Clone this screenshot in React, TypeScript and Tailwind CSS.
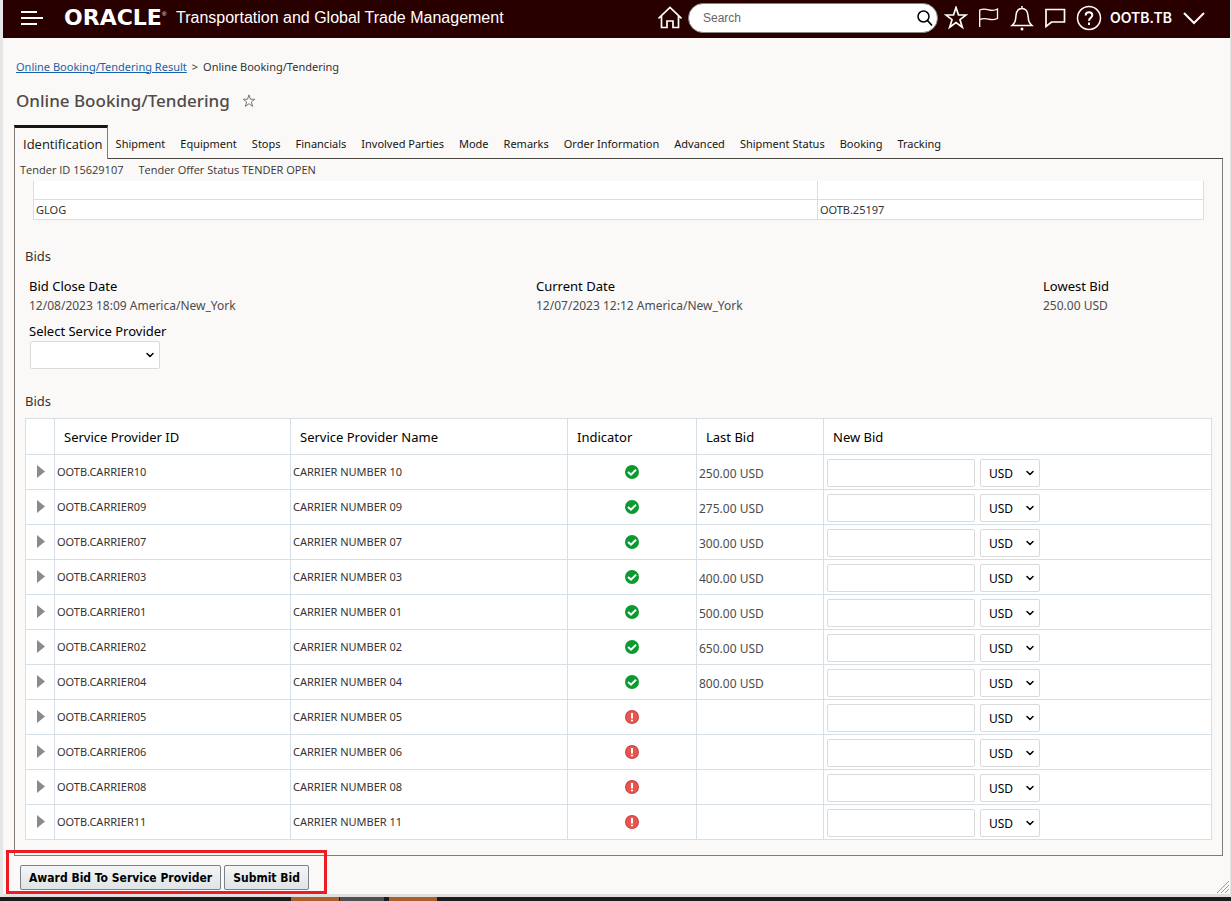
import { ChevronDown } from 'lucide-react'

const TABS = [
  'Shipment', 'Equipment', 'Stops', 'Financials', 'Involved Parties', 'Mode', 'Remarks',
  'Order Information', 'Advanced', 'Shipment Status', 'Booking', 'Tracking',
]

const BIDS = [
  { no: '10', bid: '250.00 USD' },
  { no: '09', bid: '275.00 USD' },
  { no: '07', bid: '300.00 USD' },
  { no: '03', bid: '400.00 USD' },
  { no: '01', bid: '500.00 USD' },
  { no: '02', bid: '650.00 USD' },
  { no: '04', bid: '800.00 USD' },
  { no: '05', bid: '' },
  { no: '06', bid: '' },
  { no: '08', bid: '' },
  { no: '11', bid: '' },
]

const ICON = { fill: 'none', stroke: 'currentColor', strokeWidth: 1.7, 'aria-hidden': true } as const

function HomeIcon() {
  return (
    <svg width="24" height="24" viewBox="0 0 24 24" {...ICON}>
      <path d="M.5 12.500 12 1.500l11.500 11M3.500 10v11.500H9v-6.500h6v6.500h5.500V10" />
    </svg>
  )
}

function StarIcon({ size }: { size: number }) {
  return (
    <svg width={size} height={size} viewBox="0 0 24 24" {...ICON}>
      <path d="m12 1.500 2.500 7.500h7.500l-6 4.700 2.300 7.500-6.300-4.600-6.300 4.600L8 13.700 2 9h7.500z" />
    </svg>
  )
}

function FlagIcon() {
  return (
    <svg width="22" height="22" viewBox="0 0 22 22" {...ICON} strokeWidth={1.3}>
      <path d="M1.700 20V3c3.500-1.500 6-1 9-.2s5.500 1 8.800-.8v9.500c-3.300 1.500-6 1.500-9 .7s-5.500-1.200-8.800.5" />
    </svg>
  )
}

function BellIcon() {
  return (
    <svg width="24" height="26" viewBox="0 0 24 26" {...ICON} strokeWidth={1.5}>
      <path d="M2 20.500c3.500-3 3.500-5 4-10C6.400 6.500 8.500 3.500 12 3.500s5.600 3 6 7c.5 5 .5 7 4 10zM12 3.500V1" />
      <circle cx="12" cy="24" r="1.500" fill="currentColor" stroke="none" />
    </svg>
  )
}

function CommentIcon() {
  return (
    <svg width="22" height="22" viewBox="0 0 22 22" {...ICON}>
      <path d="M2 2.500h18.500v12.500H7.500L2 19.500z" />
    </svg>
  )
}

function HelpIcon() {
  return (
    <svg width="26" height="26" viewBox="0 0 26 26" {...ICON} strokeWidth={2}>
      <circle cx="13" cy="13" r="11.500" strokeWidth={1.5} />
      <path d="M9.700 10.500C9.700 8.300 11 7.300 13 7.300s3.300 1.100 3.300 3c0 2.400-3.300 2.600-3.300 5.400M13 17.500V20" />
    </svg>
  )
}

function Indicator({ ok }: { ok: boolean }) {
  return (
    <svg
      className="mx-auto block"
      width="14"
      height="14"
      viewBox="0 0 14 14"
      role="img"
      aria-label={ok ? 'Bid received' : 'No bid'}
    >
      <circle cx="7" cy="7" r="7" fill={ok ? '#0a9a2f' : '#c9433f'} />
      {ok
        ? <path d="m3 7 3 2.600 5-4.900" fill="none" stroke="#fff" strokeWidth="2" />
        : (
          <>
            <circle cx="7" cy="7" r="6" fill="#e85550" />
            <path d="M7 3v5.500M7 9.700v1.600" stroke="#fff" strokeWidth="2" />
          </>
        )}
    </svg>
  )
}

function Select({ label, id, value, className }: { label: string; id?: string; value: string; className: string }) {
  return (
    <span className={`relative inline-flex ${className}`}>
      <select
        id={id}
        aria-label={label}
        className="h-7 w-full appearance-none rounded-xs border border-[#dadada] bg-white pl-2 pt-px text-xs text-black"
      >
        <option>{value}</option>
      </select>
      <ChevronDown className="pointer-events-none absolute right-1 top-2 h-3 w-3 text-black" strokeWidth={3} aria-hidden="true" />
    </span>
  )
}

function Header() {
  return (
    <header className="flex h-[38px] items-center bg-[#280000] pb-0.5 pl-[17px] pr-6 font-['Liberation_Sans',sans-serif] text-white">
      <button type="button" aria-label="Menu" className="mr-5">
        <svg width="24" height="16" viewBox="0 0 24 16" {...ICON} strokeWidth={2}>
          <path d="M1 2h16M1 8h22M1 14h16" />
        </svg>
      </button>
      <span className="flex w-28 items-start whitespace-nowrap">
        <span className="font-['DejaVu_Sans',sans-serif] text-[22px] font-bold leading-6">ORACLE</span>
        <span className="text-[6px] leading-4">®</span>
      </span>
      <span className="flex-1 whitespace-nowrap text-base">Transportation and Global Trade Management</span>
      <div className="flex items-center">
        <button type="button" aria-label="Home" className="mr-1.5"><HomeIcon /></button>
        <div className="relative mr-1.5">
          <input
            type="search"
            placeholder="Search"
            aria-label="Search"
            className="block h-[30px] w-[250px] rounded-full border border-[#8a8580] bg-white pl-3.5 pr-8 text-xs text-black placeholder:text-[#666]"
          />
          <svg className="absolute right-1 top-1.5 text-black" width="18" height="18" viewBox="0 0 18 18" {...ICON}>
            <circle cx="7.500" cy="7.500" r="5.500" strokeWidth="1.500" />
            <path d="m11.500 11.500 4.500 5" />
          </svg>
        </div>
        <div className="flex items-center gap-2.5">
          <button type="button" aria-label="Favorites"><StarIcon size={24} /></button>
          <button type="button" aria-label="Flag"><FlagIcon /></button>
          <button type="button" aria-label="Notifications"><BellIcon /></button>
          <button type="button" aria-label="Comments"><CommentIcon /></button>
          <button type="button" aria-label="Help"><HelpIcon /></button>
        </div>
        <button type="button" className="ml-2 flex items-center gap-2.5 font-['Inter',sans-serif] text-sm font-semibold">
          OOTB.TB
          <svg width="24" height="16" viewBox="0 0 24 16" {...ICON} strokeWidth={2}>
            <path d="m2 3 10 10L22 3" />
          </svg>
        </button>
      </div>
    </header>
  )
}

function TabStrip() {
  return (
    <nav className="flex h-[34px] items-stretch" aria-label="Sections">
      <a
        href="#identification"
        aria-current="page"
        className="flex items-center border-x border-t-3 border-x-[#807b77] border-t-[#161513] pl-2 pr-1 pt-0.5 font-['Open_Sans',sans-serif] text-[13px] text-[#161513]"
      >
        Identification
      </a>
      <div className="flex flex-1 items-center gap-[15px] border-b border-[#4a4743] pl-2 pt-1.5 text-[11px] text-[#161513]">
        {TABS.map((tab) => (
          <a key={tab} href="#tab" className="whitespace-nowrap">{tab}</a>
        ))}
      </div>
    </nav>
  )
}

function Field({ label, value }: { label: string; value: string }) {
  return (
    <div>
      <dt className="text-black">{label}</dt>
      <dd className="text-xs leading-[19px] text-[#4c4c4c]">{value}</dd>
    </div>
  )
}

function BidTable() {
  const head = 'border-b border-r border-[#d6dfe6] pl-[9px] text-left text-[13px] font-normal text-black'
  const cell = 'border-b border-r border-[#d6dfe6] pl-0.5 text-[11px] text-[#333]'
  return (
    <table className="w-full table-fixed border-separate border-spacing-0 border-l border-t border-[#d6dfe6] bg-white">
      <colgroup>
        <col className="w-[29px]" />
        <col className="w-[236px]" />
        <col className="w-[277px]" />
        <col className="w-[129px]" />
        <col className="w-[127px]" />
        <col />
      </colgroup>
      <thead>
        <tr className="h-9">
          <th className={head} aria-label="Expand" />
          <th className={head}>Service Provider ID</th>
          <th className={head}>Service Provider Name</th>
          <th className={head}>Indicator</th>
          <th className={head}>Last Bid</th>
          <th className={head}>New Bid</th>
        </tr>
      </thead>
      <tbody>
        {BIDS.map(({ no, bid }) => (
          <tr key={no} className="h-[35px]">
            <td className={cell}>
              <button type="button" aria-label={`Expand carrier ${no}`} className="ml-[9px] block">
                <svg width="9" height="14" viewBox="0 0 9 14" fill="#878c90" aria-hidden="true">
                  <path d="M0 0 8 6.500 0 13z" />
                </svg>
              </button>
            </td>
            <td className={cell}>OOTB.CARRIER{no}</td>
            <td className={cell}>CARRIER NUMBER {no}</td>
            <td className="border-b border-r border-[#d6dfe6]"><Indicator ok={bid !== ''} /></td>
            <td className="border-b border-r border-[#d6dfe6] pl-0.5 pt-1 text-xs text-[#4c4c4c]">{bid}</td>
            <td className="border-b border-r border-[#d6dfe6] pl-[3px]">
              <div className="flex gap-[5px] pt-0.5">
                <input
                  type="text"
                  aria-label={`New bid for carrier ${no}`}
                  className="h-7 w-[148px] rounded-xs border border-[#dadada] bg-white px-1 text-xs"
                />
                <Select label={`Currency for carrier ${no}`} value="USD" className="w-[60px]" />
              </div>
            </td>
          </tr>
        ))}
      </tbody>
    </table>
  )
}

export default function App() {
  const action = "h-[25px] rounded-xs border border-[#7b8187] bg-linear-to-b from-[#f3f5f6] to-[#dfe4e7] px-2 font-['DejaVu_Sans_Condensed','DejaVu_Sans',sans-serif] text-xs font-bold text-black"
  return (
    <div className="bg-[#e6e6e6] pl-[3px] pr-px font-['Noto_Sans',sans-serif]">
      <div className="bg-[#fbf9f8]">
        <Header />

        <div className="flex h-[58px] items-center gap-[5px] pl-[13px] text-[11px] text-[#333]">
          <a href="#result" className="text-[#1a62a8] underline">Online Booking/Tendering Result</a>
          <span>&gt;</span>
          <span>Online Booking/Tendering</span>
        </div>
        <div className="flex h-[29px] items-start gap-3 pl-[13px] text-[#4f4b48]">
          <h1 className="text-[17px] font-medium leading-[10px]">Online Booking/Tendering</h1>
          <button type="button" aria-label="Add to favorites" className="-mt-0.5 text-[#77736f]">
            <StarIcon size={14} />
          </button>
        </div>

        <main className="pl-[11px] pr-[7px]">
          <TabStrip />
          <section className="border-x border-b border-[#807b77] pb-[15px]">
            <div className="flex h-[22px] items-center gap-[15px] pl-[5px] font-['Open_Sans',sans-serif] text-[11px] text-[#3a3632]">
              <span>Tender ID 15629107</span>
              <span>Tender Offer Status TENDER OPEN</span>
            </div>

            <div className="px-[18px]">
              <table className="w-full table-fixed border-separate border-spacing-0 border-l border-[#d6dfe6] bg-white text-[11px] text-[#333]">
                <tbody>
                  <tr className="h-[19px]">
                    <td className="w-[67%] border-b border-r border-[#d6dfe6]" />
                    <td className="border-b border-r border-[#d6dfe6]" />
                  </tr>
                  <tr className="h-5">
                    <td className="border-b border-r border-[#d6dfe6] pl-0.5 pt-px">GLOG</td>
                    <td className="border-b border-r border-[#d6dfe6] pl-0.5 pt-px">OOTB.25197</td>
                  </tr>
                </tbody>
              </table>
            </div>

            <div className="px-2.5 text-[13px] leading-5">
              <h2 className="mt-[26px] text-[#333]">Bids</h2>
              <dl className="mt-2.5 grid grid-cols-[3fr_3fr_1fr] pl-1">
                <Field label="Bid Close Date" value="12/08/2023 18:09 America/New_York" />
                <Field label="Current Date" value="12/07/2023 12:12 America/New_York" />
                <Field label="Lowest Bid" value="250.00 USD" />
              </dl>
              <div className="mt-1.5 flex flex-col pl-1">
                <label htmlFor="provider" className="text-black">Select Service Provider</label>
                <Select id="provider" label="Select Service Provider" value="" className="ml-px w-[130px]" />
              </div>
              <h2 className="mb-[7px] mt-[22px] text-[#333]">Bids</h2>
              <BidTable />
            </div>
          </section>
        </main>

        <footer className="relative flex h-[38px] items-start gap-[3px] pl-[17px] pt-[9px]">
          <button type="button" className={action}>Award Bid To Service Provider</button>
          <button type="button" className={action}>Submit Bid</button>
          <div className="pointer-events-none absolute -top-1.5 left-[3px] h-11 w-[321px] border-3 border-[#ed1c24]" />
          <svg className="absolute bottom-0 right-0" width="14" height="14" viewBox="0 0 14 14" stroke="#999" aria-hidden="true">
            <path d="M1 13 13 1M5 13l8-8M9 13l4-4" />
          </svg>
        </footer>
      </div>
      <div className="h-[3px] bg-[#e0e0e0]" />
      <div className="-ml-[3px] -mr-px flex h-1 bg-[#1b1b1b] pl-[291px]">
        <span className="w-12 bg-[#a9602a]" />
        <span className="ml-px w-11 bg-[#505050]" />
        <span className="ml-[5px] w-12 bg-[#a9602a]" />
      </div>
    </div>
  )
}
